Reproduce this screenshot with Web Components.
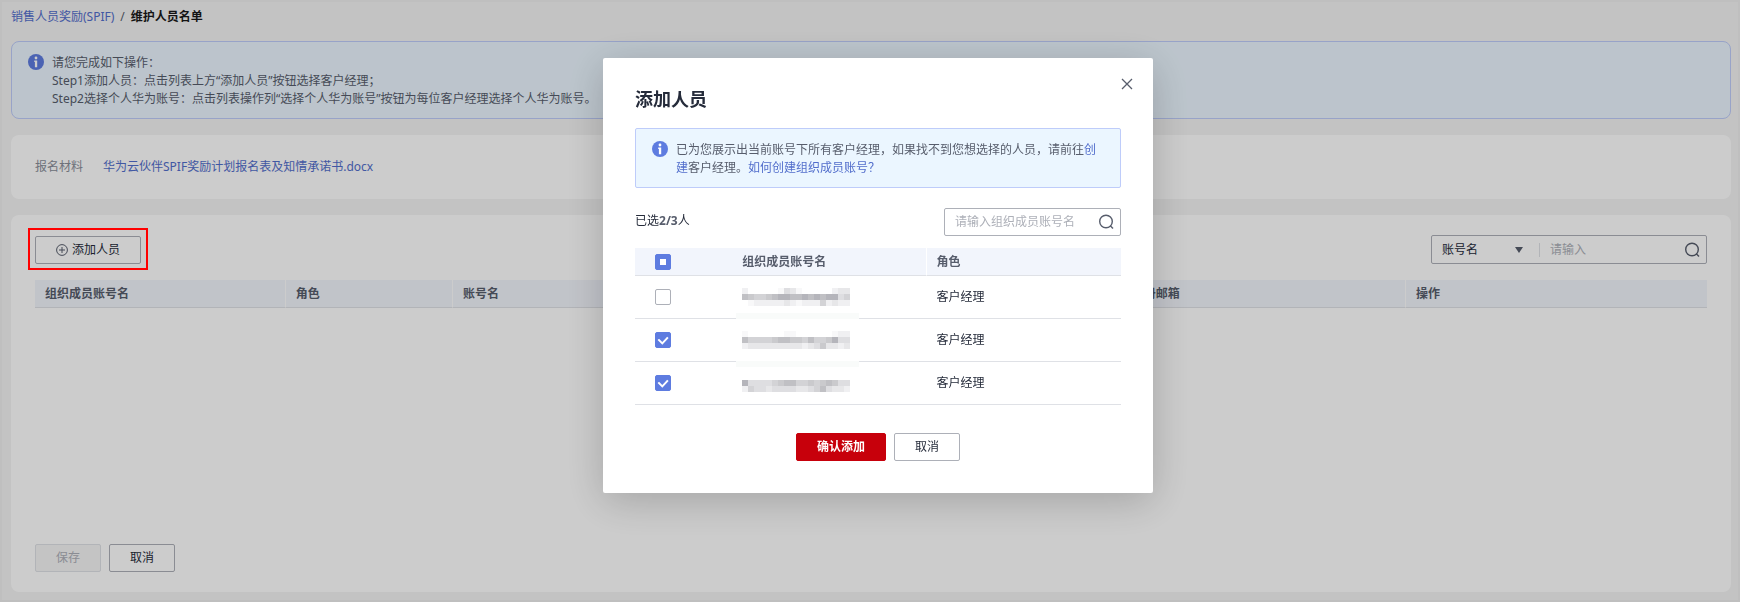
<!DOCTYPE html>
<html lang="zh-CN">
<head>
<meta charset="utf-8">
<meta name="viewport" content="width=device-width, initial-scale=1">
<title>维护人员名单</title>
<style>
  html, body { margin: 0; }
  body {
    --ink: #252b3a; --body: #575d6c; --muted: #8a8e99; --hint: #adb0b8; --link: #526ecc;
    --line: #dfe1e6; --head: #f2f5fc; --tint: #ebf6ff; --brand: #5e7ce0;
    font: 12px/18px "Noto Sans", "Noto Sans CJK SC", sans-serif; color: var(--ink); background: #f4f4f4;
  }
</style>
</head>
<body>
<spif-page></spif-page>
<script>
const define = (name, css, html, init) => {
  const t = document.createElement('template');
  t.innerHTML = `<style>*{box-sizing:border-box}a{color:var(--link);text-decoration:none}${css}</style>${html}`;
  customElements.define(name, class extends HTMLElement {
    constructor() {
      super();
      this.attachShadow({ mode: 'open' }).append(t.content.cloneNode(true));
    }
    connectedCallback() { if (init) init(this, this.shadowRoot); }
  });
};

define('ui-icon', ':host{display:inline-flex;flex:none}svg{display:block}', '', (el, root) => {
  const icons = {
    info: [16, '<circle cx="8" cy="8" r="8" fill="#5e7ce0"/><circle cx="8" cy="4" r="1.4" fill="#fff"/><path d="M6.2 6.5h3v6.7h-2.300V8h-.7z" fill="#fff"/>'],
    plus: [12, '<g fill="none" stroke="#575d6c"><circle cx="6" cy="6" r="5.400"/><path d="M6 3v6M3 6h6"/></g>'],
    search: [16, '<g fill="none" stroke="#575d6c" stroke-width="1.400"><circle cx="8" cy="7.500" r="6.300"/><path d="M12.300 11.800l2.700 2.700"/></g>'],
    close: [12, '<path d="M1 1l10 10M11 1L1 11" fill="none" stroke="#575d6c" stroke-width="1.300"/>'],
    caret: [8, '<path d="M0 1h8L4 7z" fill="#575d6c"/>']
  };
  const [s, body] = icons[el.getAttribute('name')];
  const svg = `<svg width="${s}" height="${s}" viewBox="0 0 ${s} ${s}" aria-hidden="true">${body}</svg>`;
  if (!root.querySelector('svg')) root.innerHTML += svg;
});

define('ui-button', `
  :host{display:inline-flex}
  button{font:inherit;display:flex;align-items:center;justify-content:center;gap:4px;height:28px;padding:0 20px;
    color:var(--ink);background:#fff;border:1px solid var(--hint);border-radius:2px}
  :host([primary]) button{background:#c7000b;border-color:#c7000b;color:#fff;font-weight:700}
  :host([muted]) button{background:#f5f5f6;border-color:var(--line);color:var(--hint)}
`, '<button type="button"><slot></slot></button>', (el, root) => {
  root.querySelector('button').disabled = el.hasAttribute('muted');
});

define('ui-alert', `
  :host{display:flex;gap:8px;padding:12px 16px 10px;background:var(--tint);border:1px solid #beccfa;border-radius:2px;color:var(--body)}
  :host([round]){border-radius:8px}
`, '<ui-icon name="info"></ui-icon><div><slot></slot></div>');

define('ui-card', ':host{display:flex;background:#fff;border-radius:8px;padding:20px 24px}', '<slot></slot>');

define('ui-search', `
  :host{display:flex;align-items:center;height:28px;background:#fff;border:1px solid var(--hint);border-radius:2px;padding-right:6px}
  input{font:inherit;flex:1;min-width:0;height:18px;border:0;outline:0;padding:0 0 0 10px;background:none;color:var(--ink)}
  input::placeholder{color:var(--hint);opacity:1}
`, '<slot></slot><input type="text"><ui-icon name="search"></ui-icon>', (el, root) => {
  const i = root.querySelector('input');
  i.placeholder = el.getAttribute('hint');
  i.setAttribute('aria-label', el.getAttribute('hint'));
});

define('ui-field-select', `
  :host{display:flex;align-items:center;width:108px;border-right:1px solid var(--line);height:14px}
  select{appearance:none;font:inherit;flex:1;min-width:0;border:0;background:none;color:var(--ink);padding:0 0 0 10px;outline:0}
  ui-icon{padding-right:16px}
`, '<select aria-label="搜索字段"><option>账号名</option></select><ui-icon name="caret"></ui-icon>');

define('ui-check', `
  :host{display:block;height:16px}
  input{appearance:none;display:block;margin:0;width:16px;height:16px;border:1px solid var(--hint);border-radius:2px;background:#fff center/16px no-repeat}
  input:checked,input:indeterminate{border-color:var(--brand);background-color:var(--brand)}
  input:checked{background-image:url("data:image/svg+xml,%3Csvg xmlns='http://www.w3.org/2000/svg' viewBox='0 0 16 16'%3E%3Cpath d='M3.300 7.400l4 4 5.600-6' fill='none' stroke='white' stroke-width='2'/%3E%3C/svg%3E")}
  input:indeterminate{background-image:url("data:image/svg+xml,%3Csvg xmlns='http://www.w3.org/2000/svg' viewBox='0 0 16 16'%3E%3Cpath d='M5 5h6v6H5z' fill='white'/%3E%3C/svg%3E")}
`, '<input type="checkbox">', (el, root) => {
  const i = root.querySelector('input');
  i.checked = el.getAttribute('state') === 'on';
  i.indeterminate = el.getAttribute('state') === 'some';
  i.setAttribute('aria-label', el.getAttribute('label'));
});

/* Pixelated account name; each digit is a shade, 0 = blank. */
define('masked-name', ':host{display:block}svg{display:block}', '<svg width="108" height="18" aria-hidden="true"></svg>', (el, root) => {
  const shades = ['', '#f8f8f9', '#f0f0f2', '#e7e7e9', '#dedee1', '#d3d3d6', '#cacacd', '#c0c0c4', '#b5b5bb'];
  root.querySelector('svg').innerHTML = el.getAttribute('cells').split('/').map((row, y) =>
    [...row].map((n, x) => +n ? `<rect x="${x * 6}" y="${y * 6}" width="6" height="6" fill="${shades[n]}"/>` : '').join('')).join('');
});

const tableCss = `
  table{width:100%;border-collapse:separate;border-spacing:0;table-layout:fixed}
  th{height:28px;padding:0 10px;text-align:left;font-weight:700;color:var(--body);background:var(--head);
    border-bottom:1px solid var(--line);white-space:nowrap}
  th.cut{border-right:1px solid #fff}
`;

define('staff-table', ':host{display:block}' + tableCss, `
  <table>
    <colgroup><col style="width:15%"><col style="width:10%"><col style="width:40%"><col style="width:17%"><col></colgroup>
    <thead><tr><th class="cut">组织成员账号名</th><th class="cut">角色</th><th class="cut">账号名</th><th class="cut">注册邮箱</th><th>操作</th></tr></thead>
  </table>`);

define('member-table', ':host{display:block}' + tableCss + `
  td{height:43px;padding:0 10px;border-bottom:1px solid var(--line);position:relative}
  th:first-child,td:first-child{padding-left:20px}
  .smudge::after{content:"";position:absolute;left:4px;bottom:-1px;width:123px;height:6px;background:#f9fbfa}
  .low::after{bottom:-6px;z-index:1}
`, `
  <table>
    <colgroup><col style="width:20%"><col style="width:40%"><col></colgroup>
    <thead><tr><th><ui-check state="some" label="全选"></ui-check></th><th class="cut">组织成员账号名</th><th>角色</th></tr></thead>
    <tbody>
      <tr><td><ui-check label="选择第一位"></ui-check></td><td class="smudge"><masked-name cells="200000143100000233/765567887787878845/012222232122252322"></masked-name></td><td>客户经理</td></tr>
      <tr><td><ui-check state="on" label="选择第二位"></ui-check></td><td class="smudge low"><masked-name cells="100000011000000122/755556776657556844/233333333323463323"></masked-name></td><td>客户经理</td></tr>
      <tr><td><ui-check state="on" label="选择第三位"></ui-check></td><td><masked-name cells="000000000000000000/844445677556567644/254434444334574332"></masked-name></td><td>客户经理</td></tr>
    </tbody>
  </table>`);

define('add-dialog', `
  :host{position:fixed;inset:0;z-index:1;background:rgba(0,0,0,.2);display:flex;justify-content:center;align-items:flex-start;padding:58px 0 0 16px}
  section{width:550px;max-width:100%;background:#fff;border-radius:2px;box-shadow:0 8px 40px rgba(0,0,0,.2);padding:20px 32px 32px}
  header{display:flex;justify-content:space-between;align-items:flex-start;height:50px}
  h2{margin:0;padding-top:7px;font-size:18px;line-height:28px;font-weight:700}
  .close{border:0;background:none;padding:0;margin-right:-12px;display:flex}
  ui-alert{padding-right:14px}
  .tools{display:flex;justify-content:space-between;align-items:flex-start;margin:20px 0 12px}
  .count{padding-top:4px}
  b{color:var(--body)}
  ui-search{width:177px}
  footer{display:flex;justify-content:center;gap:8px;margin-top:28px}
`, `
  <section role="dialog" aria-label="添加人员">
    <header><h2>添加人员</h2><button class="close" type="button" aria-label="关闭"><ui-icon name="close"></ui-icon></button></header>
    <ui-alert>已为您展示出当前账号下所有客户经理，如果找不到您想选择的人员，请前往<a href="#create">创建</a>客户经理。<a href="#help">如何创建组织成员账号？</a></ui-alert>
    <div class="tools"><span class="count">已选<b>2/3</b>人</span><ui-search hint="请输入组织成员账号名"></ui-search></div>
    <member-table></member-table>
    <footer><ui-button primary>确认添加</ui-button><ui-button>取消</ui-button></footer>
  </section>`);

define('spif-page', `
  :host{display:flex;flex-direction:column;gap:16px;min-height:100vh;border:2px solid #efefef;padding:6px 7px 8px 9px;box-sizing:border-box}
  nav{display:flex;gap:6px;color:var(--body);margin-bottom:-1px}
  nav b{color:#191919}
  .material{align-items:center;gap:20px;padding:23px 24px;color:var(--muted)}
  .list{flex:1;flex-direction:column}
  .bar{display:flex;justify-content:space-between;align-items:flex-end;margin-bottom:16px}
  .mark{position:relative;display:flex}
  .mark::after{content:"";position:absolute;z-index:2;inset:-8px -7px -6px;border:2px solid red;pointer-events:none}
  .bar ui-search{width:276px;height:29px}
  .actions{display:flex;gap:8px;margin-top:auto}
`, `
  <nav><a href="#spif">销售人员奖励(SPIF)</a><span>/</span><b>维护人员名单</b></nav>
  <ui-alert round>请您完成如下操作：<br>Step1添加人员：点击列表上方“添加人员”按钮选择客户经理；<br>Step2选择个人华为账号：点击列表操作列“选择个人华为账号”按钮为每位客户经理选择个人华为账号。</ui-alert>
  <ui-card class="material"><span>报名材料</span><a href="#file">华为云伙伴SPIF奖励计划报名表及知情承诺书.docx</a></ui-card>
  <ui-card class="list">
    <div class="bar">
      <div class="mark"><ui-button><ui-icon name="plus"></ui-icon>添加人员</ui-button></div>
      <ui-search hint="请输入"><ui-field-select></ui-field-select></ui-search>
    </div>
    <staff-table></staff-table>
    <div class="actions"><ui-button muted>保存</ui-button><ui-button>取消</ui-button></div>
  </ui-card>
  <add-dialog></add-dialog>`);
</script>
</body>
</html>
